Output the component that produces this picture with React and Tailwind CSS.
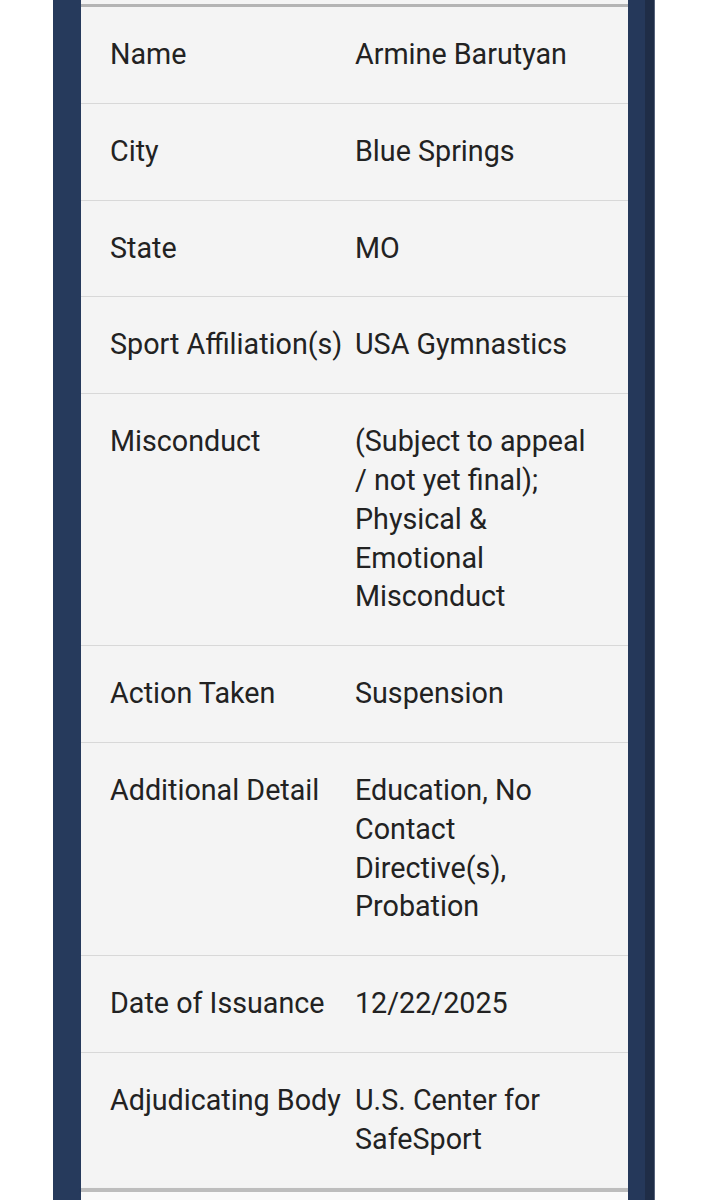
import React from "react";

const rows = [
  ["Name", "Armine Barutyan"],
  ["City", "Blue Springs"],
  ["State", "MO"],
  ["Sport Affiliation(s)", "USA Gymnastics"],
  ["Misconduct", "(Subject to appeal / not yet final); Physical & Emotional Misconduct"],
  ["Action Taken", "Suspension"],
  ["Additional Detail", "Education, No Contact Directive(s), Probation"],
  ["Date of Issuance", "12/22/2025"],
  ["Adjudicating Body", "U.S. Center for SafeSport"],
];

export default function App() {
  return (
    <div
      className="flex w-[709px] h-[1200px] bg-white overflow-hidden"
      style={{ fontFamily: "Roboto, 'Noto Sans', sans-serif" }}
    >
      <div className="w-[53px] shrink-0 bg-white" />
      <div className="w-[28px] shrink-0 bg-[#263a5c]" />
      <div className="w-[547px] shrink-0 flex flex-col">
        <div className="bg-[#f4f4f4] pt-[4px]">
          <div className="border-t-[3px] border-[#b4b4b4]">
            {rows.map(([label, value], i) => (
              <div
                key={label}
                className={`grid grid-cols-[245px_1fr] px-[29px] pt-[28px] pb-[29px] text-[28.7px] leading-[38.8px] text-[#222222] ${
                  i < rows.length - 1 ? "border-b border-[#d8d8d8]" : ""
                }`}
              >
                <div className="whitespace-nowrap">{label}</div>
                <div>{value}</div>
              </div>
            ))}
          </div>
        </div>
        <div className="h-[4px] bg-[#bdbdbd] shadow-[0_1px_2px_rgba(0,0,0,0.15)]" />
        <div className="flex-1 bg-[#fafafa]" />
      </div>
      <div className="w-[17px] shrink-0 bg-[#25385a]" />
      <div className="w-[9px] shrink-0 bg-[#1f2d47]" />
      <div className="w-[1px] shrink-0 bg-[#56627a]" />
      <div className="flex-1 bg-white" />
    </div>
  );
}
